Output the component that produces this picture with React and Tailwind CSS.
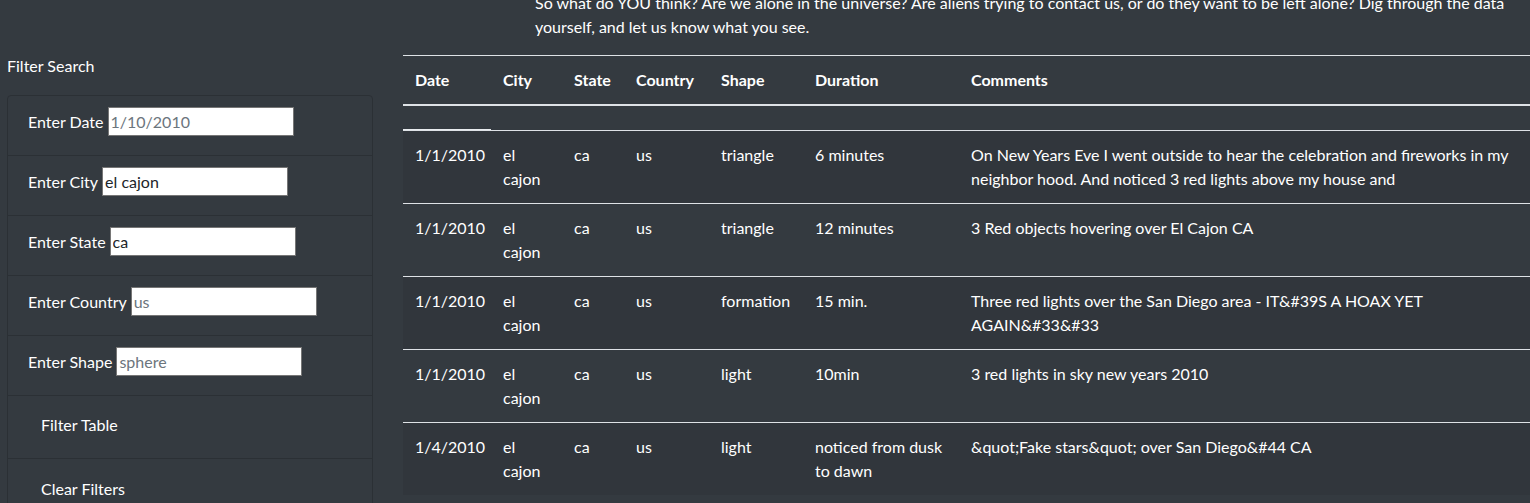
import React from 'react';

const font = { fontFamily: '"Lato", "Liberation Sans", sans-serif' };

function App() {
  // filter fields shown in the sidebar
  const filters = [
    { label: 'Enter Date', value: '', placeholder: '1/10/2010' },
    { label: 'Enter City', value: 'el cajon', placeholder: '' },
    { label: 'Enter State', value: 'ca', placeholder: '' },
    { label: 'Enter Country', value: '', placeholder: 'us' },
    { label: 'Enter Shape', value: '', placeholder: 'sphere' },
  ];

  const sightings = [
    { date: '1/1/2010', city: 'el cajon', state: 'ca', country: 'us', shape: 'triangle', duration: ['6 minutes'], comments: ['On New Years Eve I went outside to hear the celebration and fireworks in my', 'neighbor hood. And noticed 3 red lights above my house and'] },
    { date: '1/1/2010', city: 'el cajon', state: 'ca', country: 'us', shape: 'triangle', duration: ['12 minutes'], comments: ['3 Red objects hovering over El Cajon CA'] },
    { date: '1/1/2010', city: 'el cajon', state: 'ca', country: 'us', shape: 'formation', duration: ['15 min.'], comments: ['Three red lights over the San Diego area - IT&#39S A HOAX YET', 'AGAIN&#33&#33'] },
    { date: '1/1/2010', city: 'el cajon', state: 'ca', country: 'us', shape: 'light', duration: ['10min'], comments: ['3 red lights in sky new years 2010'] },
    { date: '1/4/2010', city: 'el cajon', state: 'ca', country: 'us', shape: 'light', duration: ['noticed from dusk', 'to dawn'], comments: ['&quot;Fake stars&quot; over San Diego&#44 CA'] },
  ];

  const cols = ['Date', 'City', 'State', 'Country', 'Shape', 'Duration', 'Comments'];
  const widths = ['w-[88px]', 'w-[71px]', 'w-[62px]', 'w-[85px]', 'w-[94px]', 'w-[156px]', 'w-[571px]'];

  const lines = (arr) => arr.map((l, i) => (
    <React.Fragment key={i}>
      {i > 0 && <br />}
      {l}
    </React.Fragment>
  ));

  return (
    <div className="w-[1530px] h-[503px] overflow-hidden bg-[#343a40] text-white text-[16px] leading-6 flex" style={font}>
      {/* Sidebar */}
      <div className="w-[403px] shrink-0 pt-[54px]">
        <p className="pl-[7px]">Filter Search</p>
        <ul className="mt-[17px] ml-[7px] w-[366px] border border-[#2b3035] rounded-t-[4px]">
          {filters.map((f) => (
            <li key={f.label} className="h-[60px] pt-[11px] pl-[20px] border-b border-[#2b3035]">
              <div className="flex items-center h-[29px]">
                <label className="mr-[4px]">{f.label}</label>
                <input
                  className="w-[186px] h-[29px] bg-white border border-[#767676] px-[2px] text-[#212529] placeholder:text-[#6c757d] outline-none"
                  style={font}
                  defaultValue={f.value}
                  placeholder={f.placeholder}
                />
              </div>
            </li>
          ))}
          <li className="h-[63px] pt-[17px] pl-[33px] border-b border-[#2b3035]">Filter Table</li>
          <li className="h-[63px] pt-[18px] pl-[33px]">Clear Filters</li>
        </ul>
      </div>

      {/* Main */}
      <div className="w-[1127px] shrink-0">
        <p className="-mt-[9px] ml-[132px] mb-[16px] w-[990px]">
          So what do YOU think? Are we alone in the universe? Are aliens trying to contact us, or do they want to be left alone? Dig through the data<br />
          yourself, and let us know what you see.
        </p>
        <table className="table-fixed w-[1127px] border-collapse">
          <thead>
            <tr className="border-t border-[#dee2e6] border-b-2">
              {cols.map((c, i) => (
                <th key={c} className={`${widths[i]} text-left font-bold px-[12px] py-[12px] align-top`}>{c}</th>
              ))}
            </tr>
          </thead>
          <tbody>
            <tr>
              <td colSpan={7} className="p-0 h-[25px] align-bottom">
                <div className="w-[88px] h-px bg-[#e9ecef]"></div>
              </td>
            </tr>
            {sightings.map((s, idx) => (
              <tr key={idx} className={`border-t border-[#dee2e6] ${idx % 2 === 0 ? 'bg-[#31363c]' : ''}`}>
                <td className="px-[12px] py-[12px] align-top">{s.date}</td>
                <td className="px-[12px] py-[12px] align-top">{s.city}</td>
                <td className="px-[12px] py-[12px] align-top">{s.state}</td>
                <td className="px-[12px] py-[12px] align-top">{s.country}</td>
                <td className="px-[12px] py-[12px] align-top">{s.shape}</td>
                <td className="px-[12px] py-[12px] align-top">{lines(s.duration)}</td>
                <td className="px-[12px] py-[12px] align-top h-[73px]">{lines(s.comments)}</td>
              </tr>
            ))}
          </tbody>
        </table>
      </div>
    </div>
  );
}

export default App;
